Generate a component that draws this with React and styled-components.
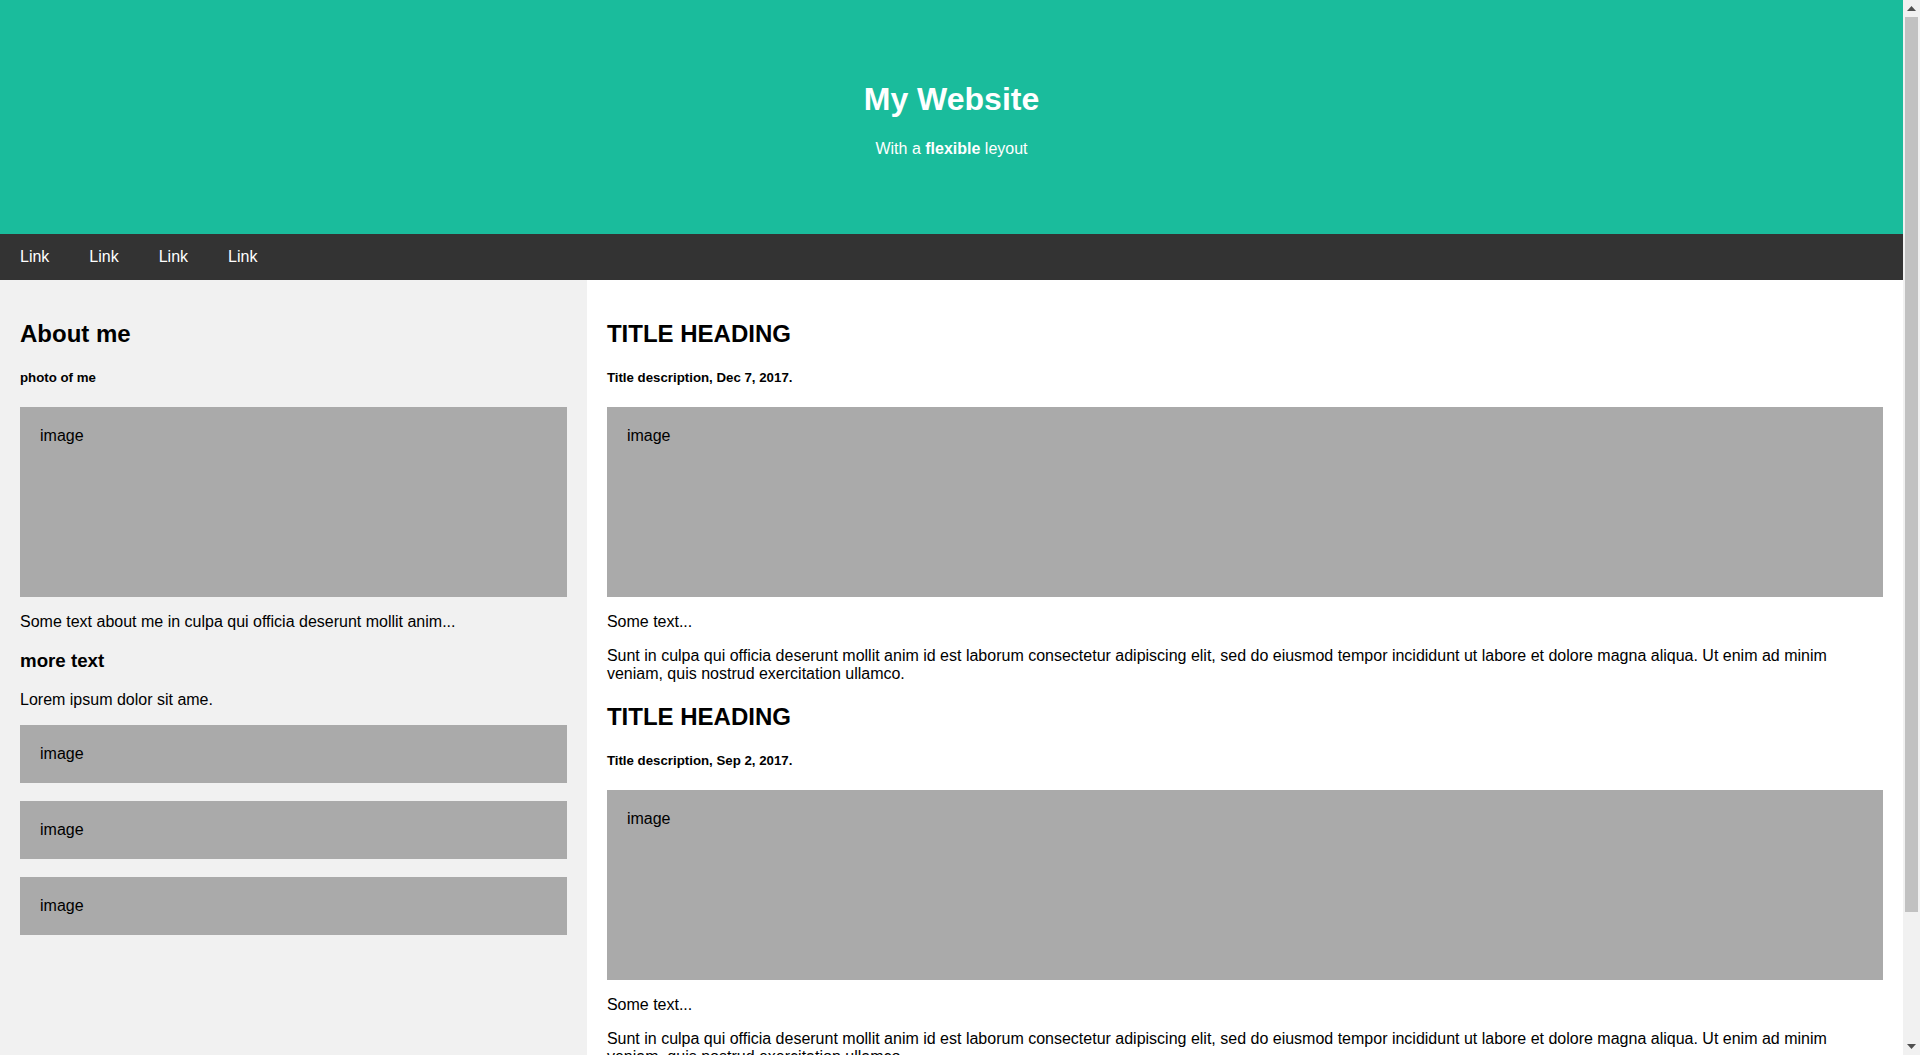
import styled, { createGlobalStyle } from 'styled-components';

const GlobalStyle = createGlobalStyle`
  body {
    margin: 0;
    overflow: hidden;
    font-family: 'Liberation Sans', Arial, Helvetica, sans-serif;
    color: #000;
  }
`;

const Page = styled.div`
  display: flex;
  height: 100vh;
`;

const Viewport = styled.div`
  flex: 1;
  min-width: 0;
  overflow-y: auto;
`;

// classic windows-style scrollbar rail
const Rail = styled.div`
  width: 17px;
  flex-shrink: 0;
  display: flex;
  flex-direction: column;
  background: #f1f1f1;
`;

const Arrow = styled.div`
  height: 17px;
  display: flex;
  align-items: center;
  justify-content: center;
`;

const Thumb = styled.div`
  height: 895px;
  margin: 0 2px;
  background: #c1c1c1;
`;

const Spacer = styled.div`
  flex: 1;
`;

const Header = styled.header`
  padding: 60px;
  text-align: center;
  background: #1abc9c;
  color: white;

  & h1 {
    font-size: 32px;
    margin: 21.44px 0;
  }

  & p {
    margin: 16px 0;
  }
`;

const Navbar = styled.nav`
  display: flex;
  background-color: #333;
`;

const NavLink = styled.a`
  display: block;
  color: white;
  text-align: center;
  padding: 14px 20px;
  text-decoration: none;
  font-size: 16px;
  line-height: 18px;
`;

const Row = styled.div`
  display: flex;
  flex-wrap: nowrap;
`;

const Side = styled.aside`
  flex: 30%;
  background-color: #f1f1f1;
  padding: 20px;
`;

const Main = styled.main`
  flex: 70%;
  background-color: white;
  padding: 20px;
`;

const Heading = styled.h2`
  font-size: 24px;
  margin: 19.92px 0;
`;

const SubHeading = styled.h3`
  font-size: 18.72px;
  margin: 18.72px 0;
`;

const Caption = styled.h5`
  font-size: 13.28px;
  margin: 22.18px 0;
`;

const Text = styled.p`
  margin: 16px 0;
  font-size: 16px;
  line-height: 18px;
`;

const FakeImg = styled.div`
  background-color: #aaa;
  padding: 20px;
  height: ${(p) => p.$h}px;
  font-size: 16px;
  line-height: 18px;
  margin-bottom: ${(p) => (p.$spaced ? 18 : 0)}px;
`;

const Footer = styled.footer`
  padding: 20px;
  text-align: center;
  background: #ddd;

  & h2 {
    font-size: 24px;
    margin: 19.92px 0;
  }
`;

const lorem =
  'Sunt in culpa qui officia deserunt mollit anim id est laborum consectetur adipiscing elit, sed do eiusmod tempor incididunt ut labore et dolore magna aliqua. Ut enim ad minim veniam, quis nostrud exercitation ullamco.';

const posts = ['Title description, Dec 7, 2017.', 'Title description, Sep 2, 2017.'];

function Triangle({ down }) {
  return (
    <svg width="9" height="5" viewBox="0 0 9 5">
      <polygon points={down ? '0,0 9,0 4.5,5' : '0,5 9,5 4.5,0'} fill="#505050" />
    </svg>
  );
}

export default function App() {
  return (
    <Page>
      <GlobalStyle />
      <Viewport>
        <Header>
          <h1>My Website</h1>
          <p>
            With a <b>flexible</b> leyout
          </p>
        </Header>

        <Navbar>
          <NavLink href="#">Link</NavLink>
          <NavLink href="#">Link</NavLink>
          <NavLink href="#">Link</NavLink>
          <NavLink href="#">Link</NavLink>
        </Navbar>

        <Row>
          <Side>
            <Heading>About me</Heading>
            <Caption>photo of me</Caption>
            <FakeImg $h={150}>image</FakeImg>
            <Text>Some text about me in culpa qui officia deserunt mollit anim...</Text>
            <SubHeading>more text</SubHeading>
            <Text>Lorem ipsum dolor sit ame.</Text>
            <FakeImg $h={18} $spaced>image</FakeImg>
            <FakeImg $h={18} $spaced>image</FakeImg>
            <FakeImg $h={18} $spaced>image</FakeImg>
          </Side>

          <Main>
            {posts.map((desc) => (
              <section key={desc}>
                <Heading>TITLE HEADING</Heading>
                <Caption>{desc}</Caption>
                <FakeImg $h={150}>image</FakeImg>
                <Text>Some text...</Text>
                <Text>{lorem}</Text>
              </section>
            ))}
          </Main>
        </Row>

        <Footer>
          <h2>Footer</h2>
        </Footer>
      </Viewport>

      <Rail>
        <Arrow>
          <Triangle />
        </Arrow>
        <Thumb />
        <Spacer />
        <Arrow>
          <Triangle down />
        </Arrow>
      </Rail>
    </Page>
  );
}
